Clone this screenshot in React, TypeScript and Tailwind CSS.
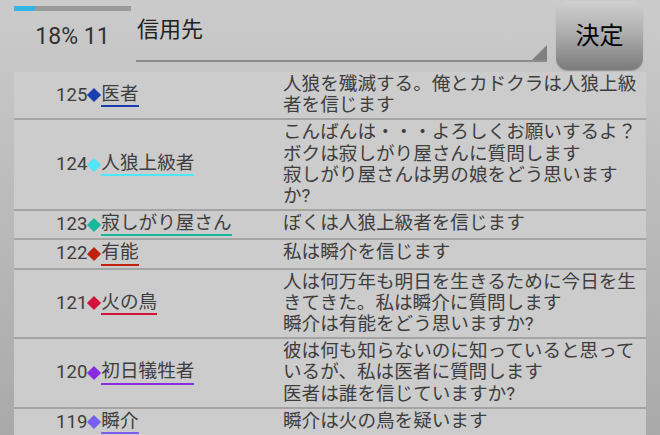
import React from 'react';

const rows = [
  { no: 125, name: '医者', color: 'bg-[#1a3db0]', line: 'border-[#1a3db0]', msg: '人狼を殲滅する。俺とカドクラは人狼上級者を信じます' },
  { no: 124, name: '人狼上級者', color: 'bg-[#4fe6f7]', line: 'border-[#4fe6f7]', msg: 'こんばんは・・・よろしくお願いするよ？ボクは寂しがり屋さんに質問します\n寂しがり屋さんは男の娘をどう思いますか?' },
  { no: 123, name: '寂しがり屋さん', color: 'bg-[#17b99a]', line: 'border-[#17b99a]', msg: 'ぼくは人狼上級者を信じます' },
  { no: 122, name: '有能', color: 'bg-[#c1220f]', line: 'border-[#c1220f]', msg: '私は瞬介を信じます' },
  { no: 121, name: '火の鳥', color: 'bg-[#d0123c]', line: 'border-[#d0123c]', msg: '人は何万年も明日を生きるために今日を生きてきた。私は瞬介に質問します\n瞬介は有能をどう思いますか?' },
  { no: 120, name: '初日犠牲者', color: 'bg-[#8a2be2]', line: 'border-[#8a2be2]', msg: '彼は何も知らないのに知っていると思っているが、私は医者に質問します\n医者は誰を信じていますか?' },
  { no: 119, name: '瞬介', color: 'bg-[#7b5cf0]', line: 'border-[#7b5cf0]', msg: '瞬介は火の鳥を疑います' },
];

export default function App() {
  return (
    <div className="w-[660px] h-[435px] overflow-hidden bg-gradient-to-b from-[#cbcbcb] to-[#a9a9a9] font-['Roboto','Noto_Sans_CJK_JP',sans-serif]">
      {/* header */}
      <div className="h-[72px] flex">
        <div className="ml-[14px] w-[117px] flex flex-col items-center">
          <div className="mt-[6px] h-[5px] w-full bg-[#9a9a9a]">
            <div className="h-full w-[18%] bg-[#33b5e5]"></div>
          </div>
          <div className="mt-[13px] text-[23px] leading-[26px] text-[#333]">18% 11</div>
        </div>
        <div className="ml-[5px] w-[411px] h-[62px] relative border-b-2 border-[#8c8c8c]">
          <div className="pt-[17px] pl-[1px] text-[22px] leading-[26px] text-[#222]">信用先</div>
          <svg className="absolute right-0 bottom-0" width="15" height="15" viewBox="0 0 15 15">
            <polygon points="15,0 15,15 0,15" fill="#808080" />
          </svg>
        </div>
        <button className="ml-[9px] mt-[1px] w-[87px] h-[69px] rounded-[12px] bg-gradient-to-b from-[#d0d0d0] via-[#ababab] to-[#7b7b7b] shadow-[0_1px_1px_rgba(0,0,0,0.25)] flex items-center justify-center text-[24px] text-black">
          決定
        </button>
      </div>

      {/* list */}
      <div className="mx-[14px] bg-[#cccccc]">
        {rows.map((r) => (
          <div key={r.no} className="flex py-[2px] border-b-2 border-[#a4a4a4] text-[18.6px] leading-[21.2px] text-[#3e3e3e]">
            <div className="w-[269px] shrink-0 flex items-center pl-[42px]">
              <span>{r.no}</span>
              <span className={`mx-[2px] w-[10px] h-[10px] rotate-45 ${r.color}`}></span>
              <span className={`border-b-2 ${r.line}`}>{r.name}</span>
            </div>
            <div className="flex-1 pr-[5px] whitespace-pre-line">{r.msg}</div>
          </div>
        ))}
      </div>
    </div>
  );
}
